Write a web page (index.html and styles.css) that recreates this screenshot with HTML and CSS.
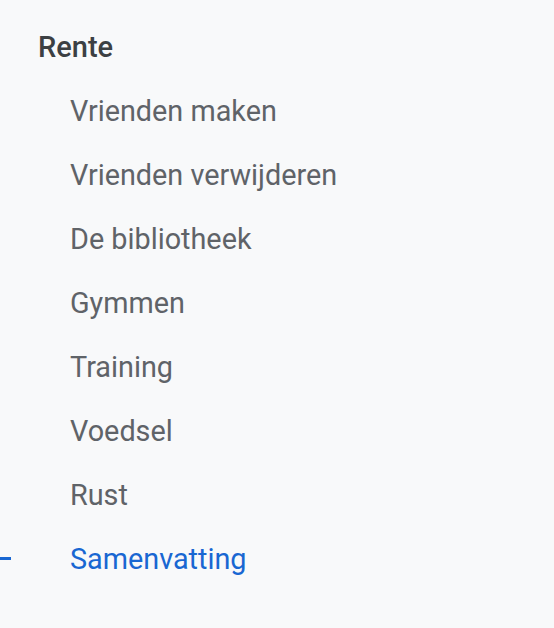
FILE: index.html
```html
<!DOCTYPE html>
<html>
<head>
<meta charset="utf-8">
<link rel="stylesheet" href="styles.css">
</head>
<body>
<nav class="toc">
  <div class="toc-title">Rente</div>
  <ul class="toc-list">
    <li class="toc-item">Vrienden maken</li>
    <li class="toc-item">Vrienden verwijderen</li>
    <li class="toc-item">De bibliotheek</li>
    <li class="toc-item">Gymmen</li>
    <li class="toc-item">Training</li>
    <li class="toc-item">Voedsel</li>
    <li class="toc-item">Rust</li>
    <li class="toc-item active">Samenvatting</li>
  </ul>
</nav>
</body>
</html>
```
FILE: styles.css
```css
html, body {
  margin: 0;
  padding: 0;
  background: #f8f9fa;
  height: 100%;
}
body {
  font-family: Roboto, "Noto Sans", sans-serif;
}
.toc {
  padding-top: 30px;
}
.toc-title {
  padding-left: 38px;
  font-size: 29px;
  font-weight: 500;
  color: #3c4043;
  line-height: 34px;
}
.toc-list {
  list-style: none;
  margin: 30px 0 0;
  padding: 0;
  display: flex;
  flex-direction: column;
  gap: 30px;
}
.toc-item {
  position: relative;
  padding-left: 70px;
  font-size: 28.8px;
  line-height: 34px;
  color: #5f6368;
}
.toc-item.active {
  color: #1967d2;
}
.toc-item.active::before {
  content: "";
  position: absolute;
  left: 0;
  top: 15px;
  width: 11px;
  height: 3px;
  background: #1967d2;
}
```
